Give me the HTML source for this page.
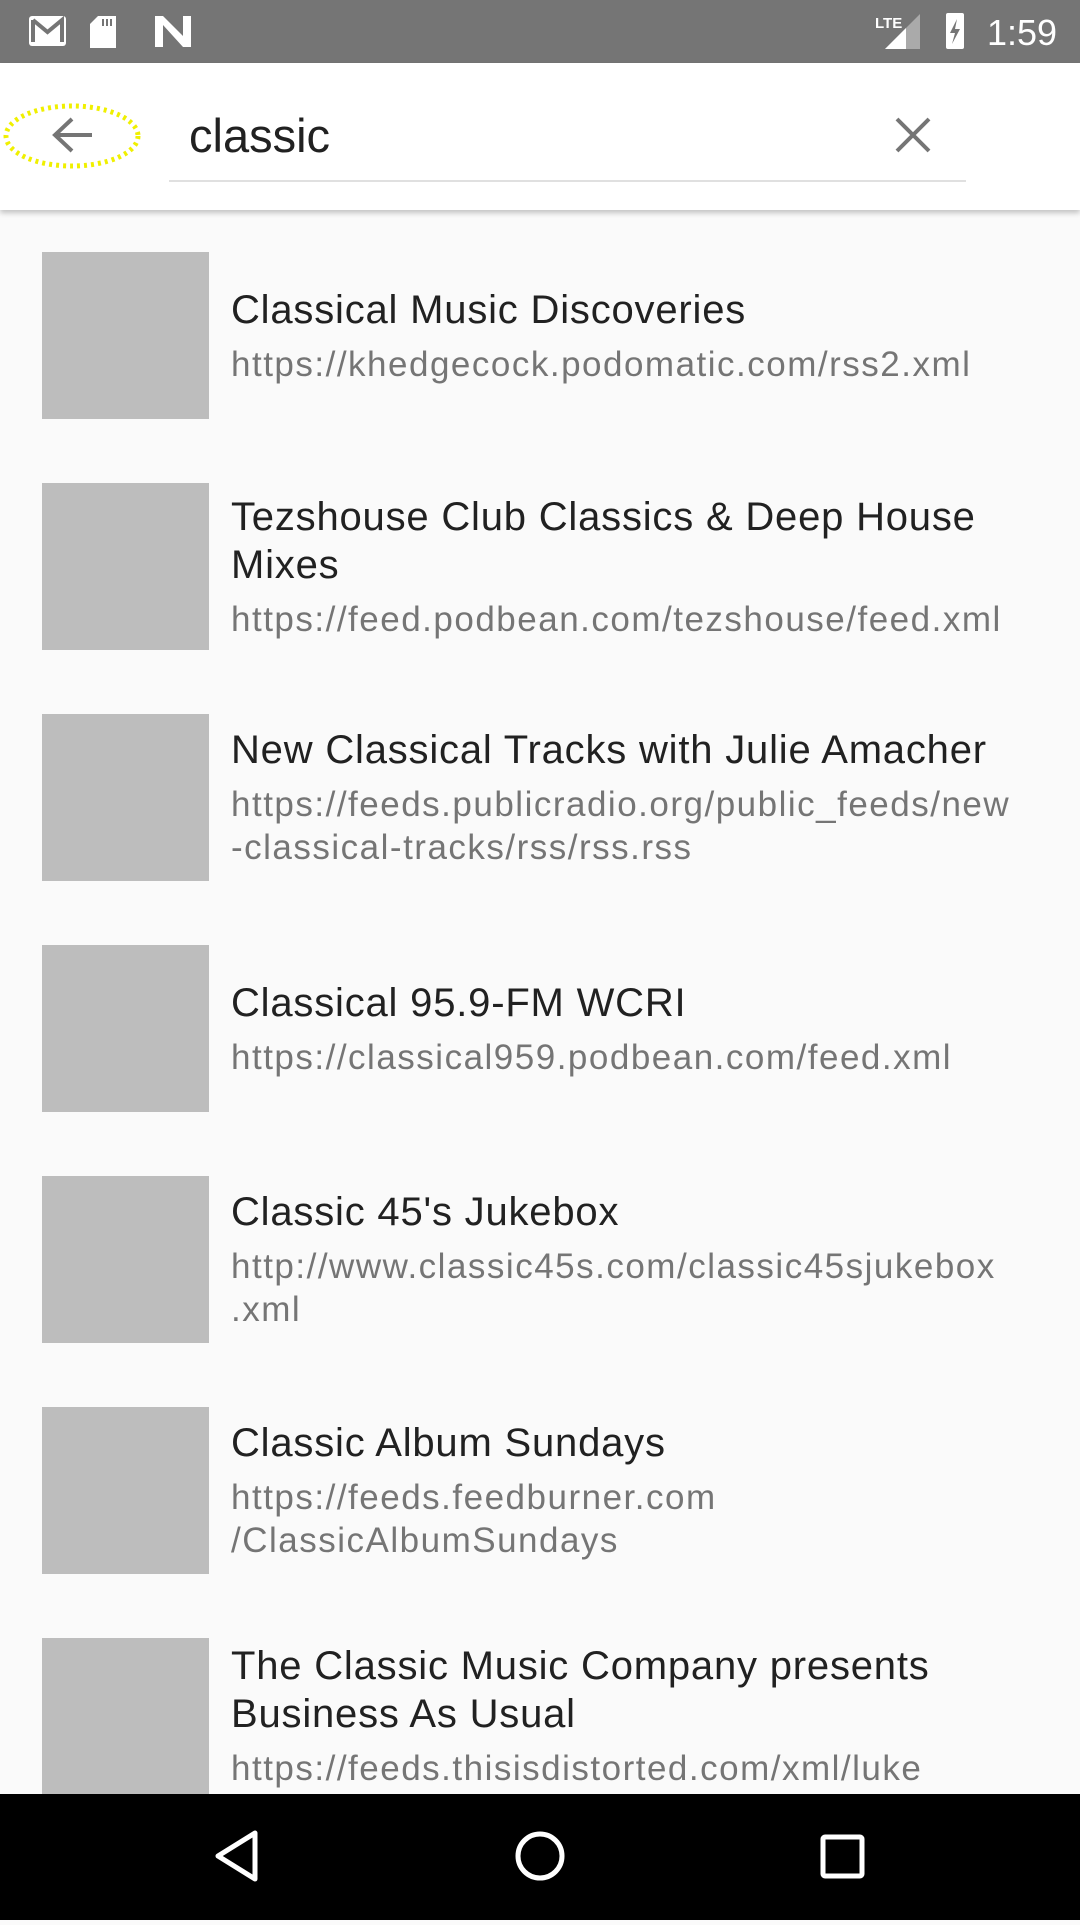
<!DOCTYPE html>
<html><head><meta charset="utf-8"><style>
*{margin:0;padding:0;box-sizing:border-box}
body{width:1080px;height:1920px;overflow:hidden;background:#fafafa;font-family:"Liberation Sans",sans-serif;position:relative}
.sb{position:absolute;top:0;left:0;width:1080px;height:63px;background:#757575}
.tb{position:absolute;top:63px;left:0;width:1080px;height:147px;background:#fff;box-shadow:0 3px 5px rgba(0,0,0,.22);z-index:2}
.row{position:absolute;left:42px;width:1020px;height:167px;display:flex;align-items:center}
.th{width:167px;height:167px;background:#bdbdbd;flex:none}
.tx{margin-left:22px;width:800px}
.t{font-size:40px;line-height:48px;color:#212121;letter-spacing:0.8px}
.u{font-size:35px;line-height:43px;color:#757575;margin-top:9px;white-space:nowrap;letter-spacing:1.5px}
.nav{position:absolute;left:0;top:1794px;width:1080px;height:126px;background:#000;z-index:3}
</style></head><body>
<div class="sb">
<svg width="1080" height="63" style="position:absolute;left:0;top:0">
<rect x="29" y="16" width="37" height="30" rx="3" fill="#fff"/>
<path d="M33 20 V42 M33 20 L47.5 32 L62 20 V42" stroke="#757575" stroke-width="4" fill="none"/>
<path d="M98 16 h18 v32 h-26 v-24 z" fill="#fff"/>
<rect x="102" y="19" width="2" height="7" fill="#757575"/><rect x="106" y="19" width="2" height="7" fill="#757575"/><rect x="110" y="19" width="2" height="7" fill="#757575"/>
<path d="M155 16 h8 l20 20 v-20 h8 v31 h-8 l-20 -22 v22 h-8 z" fill="#fff"/>
<text x="875" y="28" font-size="15" fill="#fff" font-family="Liberation Sans" font-weight="bold">LTE</text>
<path d="M920 14 V49 H885 Z" fill="#aaa"/><path d="M906 28 V49 H885 Z" fill="#fff"/>
<rect x="946" y="13" width="18" height="36" rx="2" fill="#fff"/>
<path d="M957 19 L950 33 H955 L952 44 L960 29 H955 Z" fill="#757575"/>
<text x="987" y="45" font-size="36" fill="#fff" font-family="Liberation Sans">1:59</text>
</svg>
</div>
<div class="tb">
<svg width="1080" height="147" style="position:absolute;left:0;top:0">
<ellipse cx="72" cy="73" rx="66" ry="30" fill="none" stroke="#f0f000" stroke-width="5" stroke-dasharray="3 4"/>
<path d="M92 72 H57 M72 56 L55 72 L72 88" stroke="#757575" stroke-width="4" fill="none"/>
<path d="M897 56 L929 88 M929 56 L897 88" stroke="#757575" stroke-width="4" fill="none"/>
<rect x="169" y="117" width="797" height="2" fill="#e0e0e0"/>
<text x="189" y="89" font-size="47" fill="#212121" font-family="Liberation Sans">classic</text>
</svg>
</div>
<div class="row" style="top:252px"><div class="th"></div><div class="tx"><div class="t">Classical Music Discoveries</div><div class="u">https://khedgecock.podomatic.com/rss2.xml</div></div></div>
<div class="row" style="top:483px"><div class="th"></div><div class="tx"><div class="t">Tezshouse Club Classics &amp; Deep House<br>Mixes</div><div class="u">https://feed.podbean.com/tezshouse/feed.xml</div></div></div>
<div class="row" style="top:714px"><div class="th"></div><div class="tx"><div class="t">New Classical Tracks with Julie Amacher</div><div class="u">https://feeds.publicradio.org/public_feeds/new<br>-classical-tracks/rss/rss.rss</div></div></div>
<div class="row" style="top:945px"><div class="th"></div><div class="tx"><div class="t">Classical 95.9-FM WCRI</div><div class="u">https://classical959.podbean.com/feed.xml</div></div></div>
<div class="row" style="top:1176px"><div class="th"></div><div class="tx"><div class="t">Classic 45's Jukebox</div><div class="u">http://www.classic45s.com/classic45sjukebox<br>.xml</div></div></div>
<div class="row" style="top:1407px"><div class="th"></div><div class="tx"><div class="t">Classic Album Sundays</div><div class="u">https://feeds.feedburner.com<br>/ClassicAlbumSundays</div></div></div>
<div class="row" style="top:1638px;align-items:flex-start"><div class="th"></div><div class="tx" style="margin-top:4px"><div class="t">The Classic Music Company presents<br>Business As Usual</div><div class="u">https://feeds.thisisdistorted.com/xml/luke</div></div></div>
<div class="nav">
<svg width="1080" height="126">
<path d="M255 39 L218 62 L255 85 Z" stroke="#fff" stroke-width="5" fill="none" stroke-linejoin="round"/>
<circle cx="540" cy="62" r="22" stroke="#fff" stroke-width="5" fill="none"/>
<rect x="823" y="43" width="39" height="39" rx="2" stroke="#fff" stroke-width="5" fill="none"/>
</svg>
</div>
</body></html>
